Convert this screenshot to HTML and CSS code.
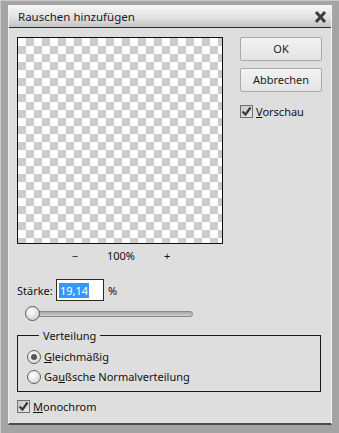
FILE: index.html
```html
<!DOCTYPE html>
<html lang="de">
<head>
    <meta charset="UTF-8">
    <title>Rauschen hinzufügen</title>
    <link rel="stylesheet" href="styles.css">
</head>
<body>
    <div class="frame">
        <div class="dialog">
            <div class="titlebar">
                <span class="title">Rauschen hinzufügen</span>
                <svg class="close" width="13" height="12" viewBox="0 0 13 12">
                    <path d="M2 1 L11 11 M11 1 L2 11" stroke="#3c3c3c" stroke-width="3" />
                </svg>
            </div>

            <div class="content">
                <div class="top-row">
                    <!-- Preview with zoom controls -->
                    <div class="preview-col">
                        <div class="preview"></div>
                        <div class="zoom-row">
                            <span class="zoom-btn">&minus;</span>
                            <span class="zoom-value">100%</span>
                            <span class="zoom-btn">+</span>
                        </div>
                    </div>

                    <!-- Buttons -->
                    <div class="button-col">
                        <div class="btn">OK</div>
                        <div class="btn">Abbrechen</div>
                        <label class="check-row preview-check">
                            <span class="checkbox">
                                <svg width="11" height="11" viewBox="0 0 11 11"><path d="M1.5 5.5 L4.5 8.5 L9.5 1.5" fill="none" stroke="#3a3a3a" stroke-width="2.2" /></svg>
                            </span>
                            <span><u>V</u>orschau</span>
                        </label>
                    </div>
                </div>

                <div class="amount-row">
                    <span class="amount-label">Stärke:</span>
                    <span class="amount-input"><span class="selected">19,14</span></span>
                    <span class="amount-unit">%</span>
                </div>

                <div class="slider">
                    <div class="slider-track"></div>
                    <div class="slider-thumb"></div>
                </div>

                <fieldset class="group">
                    <legend>Verteilung</legend>
                    <label class="radio-row">
                        <span class="radio checked"></span>
                        <span><u>G</u>leichmäßig</span>
                    </label>
                    <label class="radio-row">
                        <span class="radio"></span>
                        <span>Ga<u>u</u>ßsche Normalverteilung</span>
                    </label>
                </fieldset>

                <label class="check-row mono-check">
                    <span class="checkbox">
                        <svg width="11" height="11" viewBox="0 0 11 11"><path d="M1.5 5.5 L4.5 8.5 L9.5 1.5" fill="none" stroke="#3a3a3a" stroke-width="2.2" /></svg>
                    </span>
                    <span><u>M</u>onochrom</span>
                </label>
            </div>
        </div>
    </div>
</body>
</html>
```

FILE: styles.css
```css
html, body {
    margin: 0;
    padding: 0;
}

body {
    width: 339px;
    height: 433px;
    background-color: #a4a4a4;
    font-family: "Noto Sans", "Open Sans", sans-serif;
    font-size: 11px;
    color: #111;
    overflow: hidden;
}

/* Outer window frame */
.frame {
    height: 433px;
    box-sizing: border-box;
    padding: 4px 7px 8px 7px;
    border-left: 1px solid #c8c8c8;
    border-top: 1px solid #c8c8c8;
}

.dialog {
    height: 100%;
    box-sizing: border-box;
    background-color: #dedede;
    border-left: 1px solid #efefef;
    border-right: 1px solid #f4f4f4;
    border-bottom: 2px solid #4a4a4a;
    display: flex;
    flex-direction: column;
}

.titlebar {
    height: 21px;
    display: flex;
    align-items: center;
    justify-content: space-between;
    padding: 1px 4px 0 9px;
    background: linear-gradient(to bottom, #f6f6f6, #e2e2e2 55%, #c4c4c4);
    border-bottom: 1px solid #2e2e2e;
}

.title {
    font-size: 11.5px;
    color: #1a1a1a;
}

.close {
    margin-top: 1px;
}

.content {
    padding: 9px 10px 0 8px;
    display: flex;
    flex-direction: column;
}

.top-row {
    display: flex;
    gap: 17px;
}

.preview-col {
    display: flex;
    flex-direction: column;
}

/* Transparency checkerboard */
.preview {
    width: 204px;
    height: 205px;
    border: 1px solid #111;
    background-color: #fff;
    background-image:
        linear-gradient(45deg, #cccccc 25%, transparent 25%, transparent 75%, #cccccc 75%),
        linear-gradient(45deg, #cccccc 25%, transparent 25%, transparent 75%, #cccccc 75%);
    background-size: 16px 16px;
    background-position: 0 0, 8px 8px;
}

.zoom-row {
    display: flex;
    justify-content: center;
    gap: 29px;
    margin-top: 4px;
    padding-left: 2px;
}

.button-col {
    display: flex;
    flex-direction: column;
    gap: 7px;
}

.btn {
    width: 80px;
    height: 22px;
    line-height: 22px;
    text-align: center;
    border: 1px solid #a9a9a9;
    border-radius: 2px;
    background: linear-gradient(to bottom, #f3f3f3, #e4e4e4);
    color: #1b1b1b;
}

.check-row {
    display: flex;
    align-items: center;
    gap: 3px;
}

.preview-check {
    margin-top: 5px;
}

.checkbox {
    width: 11px;
    height: 11px;
    border: 1px solid #6f6f6f;
    background: linear-gradient(to bottom right, #c8c8c8, #e8e8e8);
    display: flex;
    align-items: center;
    justify-content: center;
}

.amount-row {
    display: flex;
    align-items: center;
    margin-top: 16px;
}

.amount-label {
    width: 39px;
}

.amount-input {
    width: 42px;
    height: 18px;
    border: 1px solid #2a2a2a;
    background-color: #fff;
    padding: 1px 2px;
    display: flex;
    align-items: center;
}

.selected {
    background-color: #3399ff;
    color: #fff;
    padding: 0 1px;
}

.amount-unit {
    margin-left: 4px;
}

/* Strength slider */
.slider {
    position: relative;
    height: 16px;
    margin: 5px 0 0 10px;
    width: 166px;
}

.slider-track {
    position: absolute;
    left: 0;
    right: 0;
    top: 5px;
    height: 4px;
    border: 1px solid #8a8a8a;
    border-radius: 3px;
    background: linear-gradient(to bottom, #a8a8a8, #cfcfcf);
}

.slider-thumb {
    position: absolute;
    left: -2px;
    top: 0;
    width: 13px;
    height: 13px;
    border: 1px solid #5a5a5a;
    border-radius: 50%;
    background: radial-gradient(circle at 40% 35%, #ffffff, #d6d6d6 70%, #b8b8b8);
}

.group {
    margin: 6px 0 0 0;
    padding: 6px 8px 7px 9px;
    border: 1px solid #1a1a1a;
    display: flex;
    flex-direction: column;
    gap: 5px;
}

.group legend {
    margin-left: 12px;
    padding: 0 4px;
}

.radio-row {
    display: flex;
    align-items: center;
    gap: 3px;
}

.radio {
    width: 12px;
    height: 12px;
    border: 1px solid #5e5e5e;
    border-radius: 50%;
    background: radial-gradient(circle at 40% 35%, #ffffff, #dcdcdc 70%, #bdbdbd);
    position: relative;
}

.radio.checked::after {
    content: "";
    position: absolute;
    left: 3px;
    top: 3px;
    width: 6px;
    height: 6px;
    border-radius: 50%;
    background: #555;
}

.mono-check {
    margin-top: 7px;
}
```
